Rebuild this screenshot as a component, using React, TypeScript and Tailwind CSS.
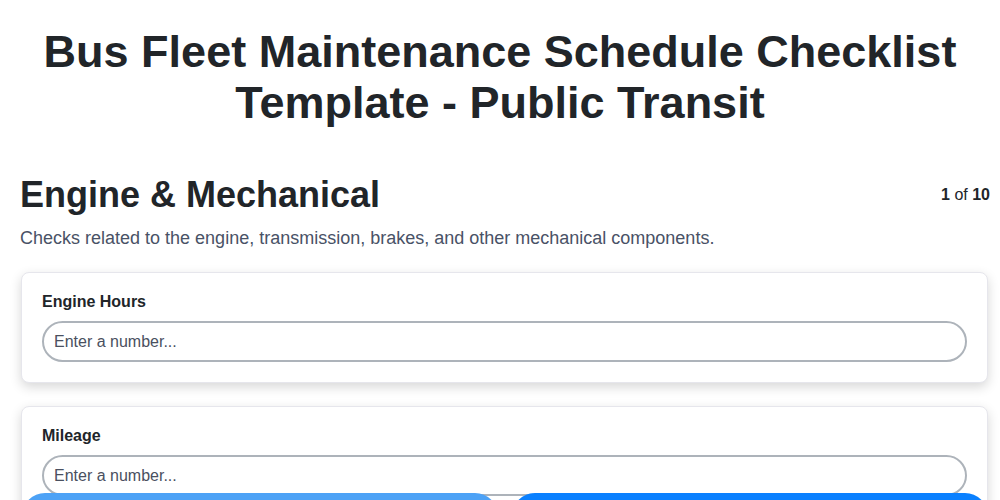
import React from "react";

function Field({ label }: { label: string }) {
  return (
    <div className="ml-px mr-[2px] mb-[23px] rounded-lg border border-[#e6e6ec] bg-white px-5 pt-[21px] pb-5 shadow-[0_4px_12px_rgba(0,0,0,0.16)]">
      <label className="mb-[11px] block text-[16px] font-bold leading-[16px] text-[#212529]">{label}</label>
      <input
        type="text"
        placeholder="Enter a number..."
        className="block h-[41px] w-full rounded-full border-2 border-[#adb3ba] bg-white px-[10px] text-[16px] text-[#212529] outline-none placeholder:text-[#4a5060]"
      />
    </div>
  );
}

export default function App() {
  return (
    <div className="min-h-screen bg-white font-['Liberation_Sans',Arial,sans-serif] text-[#212529]">
      <h1 className="pt-[26px] text-center text-[45px] font-bold leading-[51px] text-[#212529]">
        Bus Fleet Maintenance Schedule Checklist
        <br />
        Template - Public Transit
      </h1>
      <div className="pl-5 pr-[10px]">
        <div className="mt-[45px] flex items-start justify-between">
          <h2 className="text-[36px] font-bold leading-[43px]">Engine &amp; Mechanical</h2>
          <div className="pt-[13px] text-[16px] leading-[18px]">
            <span className="font-bold">1</span> of <span className="font-bold">10</span>
          </div>
        </div>
        <p className="mt-[9px] text-[18px] leading-[26px] text-[#495266]">
          Checks related to the engine, transmission, brakes, and other mechanical components.
        </p>
        <div className="mt-[21px]">
          <Field label="Engine Hours" />
          <Field label="Mileage" />
        </div>
      </div>
      <div className="fixed left-[22px] right-[12px] top-[493px] flex gap-[14px]">
        <button aria-label="Previous" className="h-[46px] flex-1 rounded-full bg-[#4da2f6]"></button>
        <button aria-label="Next" className="h-[46px] flex-1 rounded-full bg-[#0a80ff]"></button>
      </div>
    </div>
  );
}
